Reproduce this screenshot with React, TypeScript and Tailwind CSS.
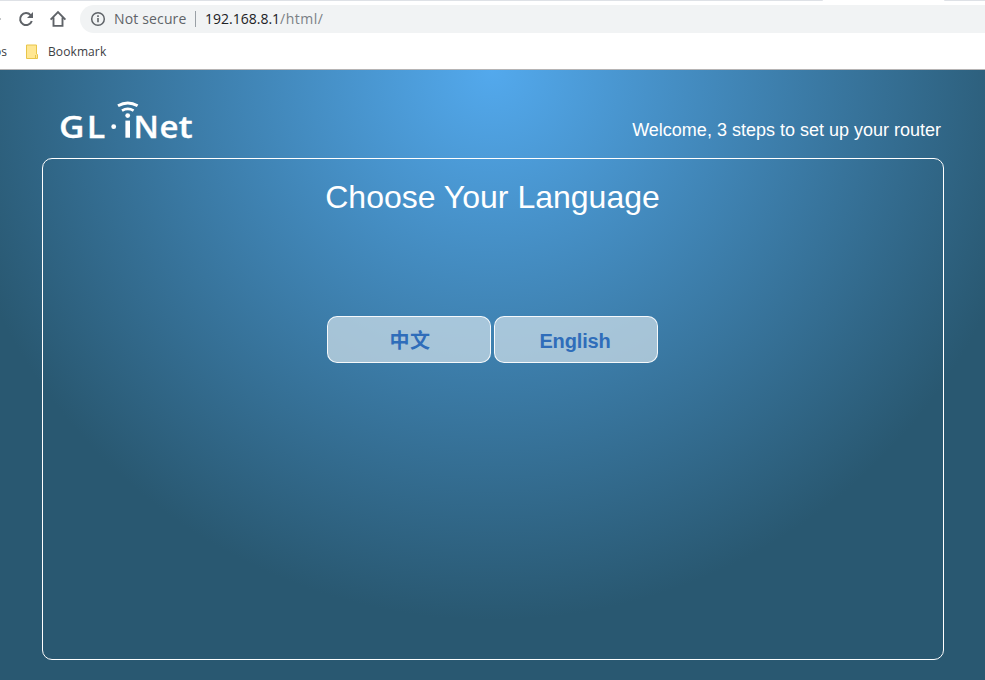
import React from "react";

function Toolbar() {
  return (
    <div className="relative flex h-[33px] items-start pt-[5px] font-['Open_Sans','Noto_Sans',sans-serif]">
      <div className="absolute left-0 top-0 h-px w-[823px] rounded-br bg-[#dee1e6]" />
      <div className="absolute left-[944px] top-0 h-px w-[41px] rounded-bl bg-[#dee1e6]" />
      <svg className="h-7 w-[80px] shrink-0" viewBox="0 0 80 28" fill="none">
        <path d="M-1 12.5 1 14l-2 1.5z" fill="#5f6368" />
        <path d="M30.6 10.1A6 6 0 1 0 31.8 16" stroke="#5f6368" strokeWidth="2" />
        <path d="M33 7v6h-6z" fill="#5f6368" />
        <path d="M50.6 14.6 58 7.2l7.4 7.4M53.5 12.5v8.4h9V12.5" stroke="#5f6368" strokeWidth="1.9" />
      </svg>
      <div className="flex h-7 flex-1 items-center rounded-l-full bg-[#f1f3f4] pl-[10px] text-sm leading-7">
        <svg className="h-4 w-4 shrink-0" viewBox="0 0 16 16" fill="none">
          <circle cx="8" cy="8" r="6.3" stroke="#5f6368" strokeWidth="1.5" />
          <path d="M8 7v4.3M8 4.3v1.6" stroke="#5f6368" strokeWidth="1.6" />
        </svg>
        <span className="ml-2 w-[73px] whitespace-nowrap tracking-[0.15px] text-[#5f6368]">Not secure</span>
        <span className="ml-[8px] h-4 w-px bg-[#9aa0a6]" />
        <span className="ml-[9px] whitespace-nowrap text-[#202124]">
          192.168.8.1<span className="tracking-[0.5px] text-[#7b8085]">/html/</span>
        </span>
      </div>
    </div>
  );
}

function Bookmarks() {
  return (
    <div className="flex h-[37px] items-center overflow-hidden border-b border-[#b6b4b4] pt-px font-['Open_Sans','Noto_Sans',sans-serif] text-[12px] leading-4 text-[#3c4043]">
      <span className="-ml-[6px] w-[14px]">os</span>
      <svg className="ml-[17px] h-4 w-[14px] shrink-0" viewBox="0 0 14 16">
        <path d="M1.5 1h10v9l1 .5v4h-11z" fill="#ffe793" stroke="#e8c54a" />
        <path d="M10.5 11v3.5" stroke="#e8c54a" />
      </svg>
      <span className="ml-[9px] tracking-[0.1px]">Bookmark</span>
    </div>
  );
}

function Logo() {
  return (
    <svg className="h-[44px] w-[140px] overflow-visible" viewBox="58 98 140 44" fill="#fff">
      <g fontFamily="'Open Sans','Noto Sans',sans-serif" fontWeight="600" fontSize="31" stroke="#fff" strokeWidth="0.3">
        <text x="59" y="137.7" textLength="25.5" lengthAdjust="spacingAndGlyphs">G</text>
        <text x="86.8" y="137.7" textLength="18.5" lengthAdjust="spacingAndGlyphs">L</text>
        <text x="133.6" y="137.7" textLength="25.4" lengthAdjust="spacingAndGlyphs">N</text>
        <text x="159.6" y="137.7" textLength="19" lengthAdjust="spacingAndGlyphs">e</text>
        <text x="178.6" y="137.7" textLength="14.2" lengthAdjust="spacingAndGlyphs">t</text>
      </g>
      <rect x="125.4" y="120.6" width="4.6" height="17.1" />
      <circle cx="113.7" cy="126.7" r="2.4" />
      <circle cx="127.7" cy="115.6" r="2.4" />
      <g fill="none" stroke="#fff">
        <path d="M118 105.8q9.8-5.4 19.6 0" strokeWidth="3" />
        <path d="M122 110.6q5.8-3.4 11.6 0" strokeWidth="2.8" />
      </g>
    </svg>
  );
}

function LanguageButton({ children }: { children: React.ReactNode }) {
  return (
    <button className="flex h-[47px] w-[164px] items-center justify-center rounded-[10px] border border-white/90 bg-[#d9e6ee]/68 pt-[2px] font-['Liberation_Sans','Noto_Sans_CJK_SC',sans-serif] text-[20px] font-bold text-[#2f6dba]">
      {children}
    </button>
  );
}

export default function App() {
  return (
    <div className="flex h-[680px] w-[985px] flex-col overflow-hidden bg-white">
      <Toolbar />
      <Bookmarks />
      <main className="flex-1 bg-[radial-gradient(circle_at_492px_0px,#53a9ed_0px,#295871_550px)] pl-[42px] pr-[41px] font-['Liberation_Sans',Arial,sans-serif] text-white">
        <header className="flex h-[88px] items-start justify-between pl-4 pr-[3px] pt-7">
          <Logo />
          <p className="mt-[20px] whitespace-nowrap text-[18px] leading-6">Welcome, 3 steps to set up your router</p>
        </header>
        <section className="flex h-[502px] flex-col items-center rounded-[10px] border border-white">
          <h1 className="mr-px mt-[18px] whitespace-nowrap text-[32px] leading-10">Choose Your Language</h1>
          <div className="mr-px mt-[99px] flex gap-[3px]">
            <LanguageButton>
              <span className="ml-[2px] tracking-[0.6px]">中文</span>
            </LanguageButton>
            <LanguageButton>
              <span className="-ml-[2px] tracking-[-0.15px]">English</span>
            </LanguageButton>
          </div>
        </section>
      </main>
    </div>
  );
}
